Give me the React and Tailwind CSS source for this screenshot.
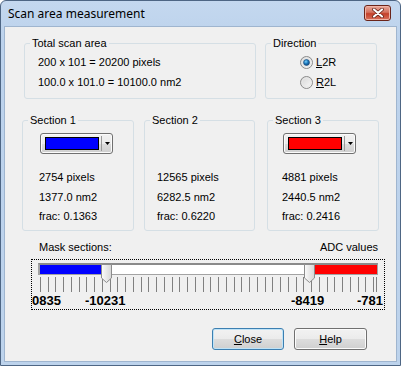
import React from 'react'

const ticks = Array.from({ length: 44 }, (_, i) => Math.round(2 + i * 7.744)).concat([338])

function GroupBox({ label, className, children }) {
  return (
    <fieldset className={`rounded-[3px] border border-[#d5dfe5] pl-[5px] ${className}`}>
      <legend className="px-[2px] leading-[13px] text-black">{label}</legend>
      {children}
    </fieldset>
  )
}

function ColorCombo({ swatch }) {
  return (
    <div className="flex h-[21px] w-[73px] items-center rounded-[3px] border border-[#707070] bg-[linear-gradient(#f2f2f2_0%,#ebebeb_50%,#dddddd_50%,#cfcfcf_100%)] pl-[4px] shadow-[inset_0_0_0_1px_#fbfbfb]">
      <div className={`h-[13px] w-[54px] border border-black ${swatch}`} />
      <div className="ml-[2px] h-[15px] w-px bg-[#9a9a9a]" />
      <div className="flex flex-1 items-center justify-center">
        <svg width="5" height="3" viewBox="0 0 5 3"><polygon points="0,0 5,0 2.5,3" fill="#000" /></svg>
      </div>
    </div>
  )
}

function Radio({ checked, label, rest }) {
  return (
    <div className="flex h-[20px] items-center">
      <svg width="13" height="13" viewBox="0 0 13 13">
        <defs>
          <linearGradient id="rbg" x1="0" y1="0" x2="1" y2="1">
            <stop offset="0" stopColor="#d4d4d4" />
            <stop offset="1" stopColor="#fbfbfb" />
          </linearGradient>
          <radialGradient id="rdot" cx="0.4" cy="0.35" r="0.7">
            <stop offset="0" stopColor="#7ad0fb" />
            <stop offset="0.5" stopColor="#1c78bc" />
            <stop offset="1" stopColor="#0c3f75" />
          </radialGradient>
        </defs>
        <circle cx="6.5" cy="6.5" r="6" fill="url(#rbg)" stroke="#8a8a8a" />
        <circle cx="6.5" cy="6.5" r="4.5" fill="none" stroke="#e8e8e8" />
        {checked && <circle cx="6.5" cy="6.5" r="3" fill="url(#rdot)" stroke="#1f4f7e" strokeWidth="0.6" />}
      </svg>
      <span className="ml-[3px]"><span className="underline">{label}</span>{rest}</span>
    </div>
  )
}

function Thumb({ className }) {
  return (
    <svg className={`absolute top-[-1px] ${className}`} width="11" height="19" viewBox="0 0 11 19">
      <defs>
        <linearGradient id="tg" x1="0" y1="0" x2="1" y2="0">
          <stop offset="0" stopColor="#fbfbfb" />
          <stop offset="1" stopColor="#d6d6d6" />
        </linearGradient>
      </defs>
      <polygon points="0.5,0.5 10.5,0.5 10.5,14 5.5,18.5 0.5,14" fill="url(#tg)" stroke="#8c8c8c" />
    </svg>
  )
}

function Button({ label, rest, isDefault, className }) {
  return (
    <button className={`flex h-[22px] items-center justify-center rounded-[3px] border bg-[linear-gradient(#f2f2f2_0%,#ebebeb_50%,#dddddd_50%,#cfcfcf_100%)] text-black ${isDefault ? 'border-[#3c7fb1] shadow-[inset_0_0_0_1px_#bfe3f7]' : 'border-[#707070] shadow-[inset_0_0_0_1px_#fbfbfb]'} ${className}`}>
      <span><span className="underline">{label}</span>{rest}</span>
    </button>
  )
}

function Section({ label, className, swatch, pad, pixels, area, frac }) {
  return (
    <GroupBox label={label} className={`h-[117px] ${className}`}>
      <div className={`mt-[6px] h-[21px] ${pad.combo}`}>{swatch && <ColorCombo swatch={swatch} />}</div>
      <div className={`mt-[14px] leading-[19.5px] ${pad.text}`}>
        <div>{pixels} pixels</div>
        <div>{area} nm2</div>
        <div>frac: {frac}</div>
      </div>
    </GroupBox>
  )
}

export default function App() {
  return (
    <div className="flex h-[366px] w-[401px] flex-col rounded-t-[6px] border border-[#4e6684] bg-[linear-gradient(#c4d8ef,#bcd2ec_40px,#bdd3ec)] font-['Liberation_Sans',Arial,sans-serif] text-[11px] text-black">
      <div className="flex h-[25px] items-center justify-between pl-[7px] pr-[9px]">
        <span className="font-['Noto_Sans',sans-serif] text-[12px] leading-none text-black">Scan area measurement</span>
        <div className="mt-[-2px] flex h-[16px] w-[27px] items-center justify-center rounded-[3px] border border-[#6b2419] bg-[linear-gradient(#e9a99b,#d4715e_45%,#c4402a_55%,#d8705c)] shadow-[inset_0_0_0_1px_#f0b4a6]">
          <svg width="12" height="10" viewBox="0 0 12 10">
            <path d="M2 1.5 L10 8.5 M10 1.5 L2 8.5" stroke="#5b1a10" strokeWidth="3.6" strokeLinecap="round" />
            <path d="M2 1.5 L10 8.5 M10 1.5 L2 8.5" stroke="#fff" strokeWidth="2.2" strokeLinecap="round" />
          </svg>
        </div>
      </div>

      <div className="mx-[3px] mb-[3px] flex flex-1 flex-col border border-[#9fb5cf] bg-[#f0f0f0] pt-[10px]">
        <div className="flex gap-[9px] pl-[19px]">
          <GroupBox label="Total scan area" className="h-[62px] w-[232px]">
            <div className="pl-[8px] pt-[2px] leading-[20px]">
              <div>200 x 101 = 20200 pixels</div>
              <div>100.0 x 101.0 = 10100.0 nm2</div>
            </div>
          </GroupBox>
          <GroupBox label="Direction" className="h-[62px] w-[112px]">
            <div className="pl-[29px] pt-[2px]">
              <Radio checked label="L" rest="2R" />
              <Radio label="R" rest="2L" />
            </div>
          </GroupBox>
        </div>

        <div className="mt-[15px] flex pl-[17px]">
          <Section label="Section 1" className="w-[112px]" swatch="bg-[#0000ff]" pad={{ combo: 'pl-[12px]', text: 'pl-[11px]' }} pixels="2754" area="1377.0" frac="0.1363" />
          <Section label="Section 2" className="ml-[10px] w-[111px]" pad={{ combo: '', text: 'pl-[7px]' }} pixels="12565" area="6282.5" frac="0.6220" />
          <Section label="Section 3" className="ml-[12px] w-[112px]" swatch="bg-[#ff0000]" pad={{ combo: 'pl-[10px]', text: 'pl-[9px]' }} pixels="4881" area="2440.5" frac="0.2416" />
        </div>

        <div className="mt-[10px] flex justify-between pl-[34px] pr-[18px] leading-[13px]">
          <span>Mask sections:</span>
          <span>ADC values</span>
        </div>

        <div className="ml-[26px] mt-[5px] h-[51px] w-[354px] border border-dotted border-black pt-[3px]">
          <div className="relative ml-[6px] flex h-[12px] w-[340px] border border-l-2 border-t-2 border-[#a3a3a3] border-t-[#8a8a8a] bg-white">
            <div className="w-[63px] bg-[#0000ff]" />
            <div className="flex-1" />
            <div className="w-[62px] bg-[#ff0000]" />
            <Thumb className="left-[61px]" />
            <Thumb className="left-[264px]" />
          </div>
          <svg className="ml-[6px] mt-[2px] block" width="340" height="15">
            {ticks.map((x, i) => (
              <line key={i} x1={x + 0.5} y1="0" x2={x + 0.5} y2="15" stroke="#808080" />
            ))}
          </svg>
          <div className="mt-[2px] flex font-['Liberation_Sans',Arial,sans-serif] text-[13px] font-bold leading-[14px]">
            <span className="w-[53px]">0835</span>
            <span className="w-[206px]">-10231</span>
            <span className="w-[66px]">-8419</span>
            <span>-781</span>
          </div>
        </div>

        <div className="mt-[18px] flex gap-[10px] pl-[207px]">
          <Button label="C" rest="lose" isDefault className="w-[72px]" />
          <Button label="H" rest="elp" className="w-[73px]" />
        </div>
      </div>
    </div>
  )
}
